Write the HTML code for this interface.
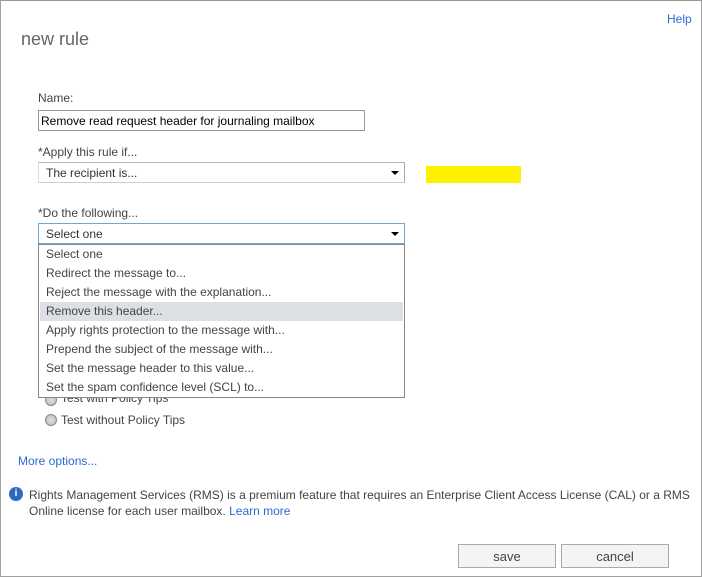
<!DOCTYPE html>
<html><head><style>
*{margin:0;padding:0;box-sizing:border-box}
body{width:702px;height:577px;overflow:hidden;background:#fff;font-family:"Liberation Sans",sans-serif;font-size:12px;color:#333;position:relative}
.frame{position:absolute;left:0;top:0;width:702px;height:577px;border:1px solid #a0a0a0;border-top-color:#999}
.a{position:absolute;white-space:nowrap}
.box{position:absolute;border:1px solid #abadb3;background:#fff}
.arrow{position:absolute;right:5px;top:8px;width:0;height:0;border-left:4px solid transparent;border-right:4px solid transparent;border-top:4px solid #000}
.item{position:absolute;left:1px;right:1px;height:19px;line-height:19px;padding-left:6px;color:#444}
.btn{position:absolute;top:544px;height:24px;border:1px solid #aaa;background:#f4f4f4;text-align:center;line-height:23px;color:#444;font-size:13px}
.radio{position:absolute;width:12px;height:12px;border-radius:50%;border:1px solid #888;background:radial-gradient(circle,#ddd,#bbb)}
</style></head><body>
<div class="frame"></div>
<div class="a" style="left:667px;top:12px;color:#2a6ad3;font-size:12px">Help</div>
<div class="a" style="left:21px;top:29px;font-size:18px;color:#666;font-weight:300">new rule</div>
<div class="a" style="left:38px;top:91px;color:#444">Name:</div>
<div class="box" style="left:38px;top:110px;width:327px;height:21px;border-color:#999"><span class="a" style="left:2px;top:3px;color:#000">Remove read request header for journaling mailbox</span></div>
<div class="a" style="left:38px;top:145px;color:#444">*Apply this rule if...</div>
<div class="box" style="left:38px;top:162px;width:367px;height:21px;border-color:#b4b4b4 #aaa #ccd #ddd"><span class="a" style="left:7px;top:3px;color:#333">The recipient is...</span><div class="arrow"></div></div>
<div class="a" style="left:426px;top:166px;width:95px;height:17px;background:#fff200"></div>
<div class="a" style="left:38px;top:206px;color:#444">*Do the following...</div>
<div class="box" style="left:38px;top:223px;width:367px;height:21px;border-color:#6fa6d4"><span class="a" style="left:7px;top:3px;color:#333">Select one</span><div class="arrow"></div></div>
<div class="box" style="left:38px;top:244px;width:367px;height:154px;border-color:#888">
<div class="item" style="top:0">Select one</div>
<div class="item" style="top:19px">Redirect the message to...</div>
<div class="item" style="top:38px">Reject the message with the explanation...</div>
<div class="item" style="top:57px;background:#dcdfe4">Remove this header...</div>
<div class="item" style="top:76px">Apply rights protection to the message with...</div>
<div class="item" style="top:95px">Prepend the subject of the message with...</div>
<div class="item" style="top:114px">Set the message header to this value...</div>
<div class="item" style="top:133px">Set the spam confidence level (SCL) to...</div>
</div>
<div style="position:absolute;left:40px;top:398px;width:200px;height:10px;overflow:hidden"><div class="radio" style="left:5px;top:-4px"></div><span class="a" style="left:21px;top:-7px;color:#444">Test with Policy Tips</span></div>
<div class="radio" style="left:45px;top:414px"></div>
<div class="a" style="left:61px;top:413px;color:#444">Test without Policy Tips</div>
<div class="a" style="left:18px;top:454px;color:#2a6ad3">More options...</div>
<div class="a" style="left:9px;top:487px;width:14px;height:14px;border-radius:50%;background:#2a6bc0;color:#fff;font-size:10px;font-weight:bold;text-align:center;line-height:14px">i</div>
<div class="a" style="left:29px;top:487px;color:#444;line-height:16px">Rights Management Services (RMS) is a premium feature that requires an Enterprise Client Access License (CAL) or a RMS<br>Online license for each user mailbox. <span style="color:#2a6ad3">Learn more</span></div>
<div class="btn" style="left:458px;width:98px">save</div>
<div class="btn" style="left:561px;width:108px">cancel</div>
</body></html>
